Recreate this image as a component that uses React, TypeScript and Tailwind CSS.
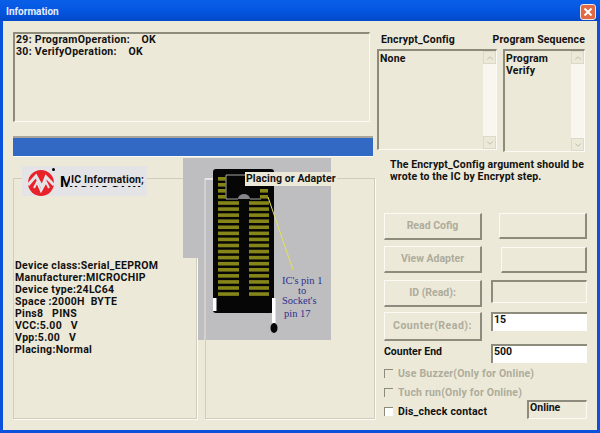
import React from 'react';
import { ChevronUp, ChevronDown } from 'lucide-react';

const FONT = "font-['Roboto','Liberation_Sans',Arial,sans-serif]";
const SUNKEN = 'border-t-2 border-l-2 border-t-[#8d8b7c] border-l-[#8d8b7c] border-b border-r border-b-[#fbfaf4] border-r-[#fbfaf4]';

const INFO_LINES = [
    'Device class:Serial_EEPROM',
    'Manufacturer:MICROCHIP',
    'Device type:24LC64',
    'Space :2000H  BYTE',
    'Pins8   PINS',
    'VCC:5.00   V',
    'Vpp:5.00   V',
    'Placing:Normal',
];

// disabled xp style scrollbar
const ScrollBar = () => (
    <div className="w-[13px] h-full bg-[#f8f6ef] flex flex-col justify-between shrink-0">
        <div className="h-[13px] bg-[#ece9d8] border border-[#dcd9c8] flex items-center justify-center">
            <ChevronUp size={10} strokeWidth={2} className="text-[#b5b3a4]" />
        </div>
        <div className="h-[13px] bg-[#ece9d8] border border-[#dcd9c8] flex items-center justify-center">
            <ChevronDown size={10} strokeWidth={2} className="text-[#b5b3a4]" />
        </div>
    </div>
);

const XpButton = ({ className, label }: { className: string; label?: string }) => (
    <div className={`flex items-center justify-center text-[#aeac9c] font-bold border-t border-l border-t-[#fbfaf4] border-l-[#fbfaf4] border-b-2 border-r-2 border-b-[#8d8b7c] border-r-[#8d8b7c] ${className}`}>
        {label}
    </div>
);

const CheckRow = ({ label, disabled }: { label: string; disabled?: boolean }) => (
    <div className={`flex items-center h-[19px] gap-[5px] font-bold tracking-[0.2px] ${disabled ? 'text-[#aeac9c]' : 'text-[#111]'}`}>
        <div className={`w-[9px] h-[9px] border-t border-l border-t-[#8d8b7c] border-l-[#8d8b7c] ${disabled ? 'bg-[#ece9d8]' : 'bg-white'}`} />
        <span>{label}</span>
    </div>
);

// socket picture that hangs over both group boxes
const SocketPicture = () => {
    const rows = Array.from({ length: 16 }, (_, i) => 45 + i * 6.07);
    return (
        <svg className="absolute left-[170px] -top-[20px]" width="150" height="184" viewBox="0 0 150 184">
            <path d="M0 0H148V182H15V100H0Z" fill="#bebec1" />
            <path d="M22 21H63" stroke="#f4f3ec" strokeWidth="1.5" />
            <path d="M22 21V182" stroke="#e6e5de" strokeWidth="1" />
            <rect x="30" y="11" width="61" height="144" rx="3" fill="#060606" />
            <path d="M43 17H62M43 17V41H55M67 41H78" fill="none" stroke="#cfcfc8" strokeWidth="0.8" />
            <path d="M55 41a6 5 0 0 1 12 0Z" fill="#85858a" />
            {[21, 27, 33, 39].map((y) => (
                <rect key={`l${y}`} x="35" y={y - 2} width="8" height="3.6" fill="#85851a" />
            ))}
            {[33, 39].map((y) => (
                <rect key={`r${y}`} x="77" y={y - 2} width="8" height="3.6" fill="#85851a" />
            ))}
            {rows.map((y) => (
                <g key={y}>
                    <rect x="35" y={y - 1.8} width="21" height="3.6" fill="#85851a" />
                    <rect x="66" y={y - 1.8} width="20" height="3.6" fill="#85851a" />
                </g>
            ))}
            <rect x="30" y="140" width="3.5" height="13" fill="#ffffff" />
            <rect x="89" y="140" width="3.5" height="26" fill="#ffffff" />
            <ellipse cx="91" cy="170" rx="3.5" ry="5" fill="#060606" />
            <path d="M85 39L110 112" stroke="#e4e05a" strokeWidth="1" />
            <g fill="#2e2e8c" fontFamily="'Liberation Serif', serif" fontSize="10.5" fontWeight="400">
                <text x="99" y="126">IC's pin 1</text>
                <text x="115" y="136">to</text>
                <text x="99" y="146">Socket's</text>
                <text x="101" y="159">pin  17</text>
            </g>
        </svg>
    );
};

const MicrochipLogo = () => (
    <div className="absolute left-[9px] -top-[12px] w-[125px] h-[30px] bg-[#e4e4e7] overflow-hidden">
        <svg className="absolute left-[6px] top-[2px]" width="26" height="28" viewBox="0 0 26 28">
            <circle cx="13" cy="15" r="13" fill="#e8222a" />
            <path d="M0 17L8 8L14 19L18 9L26 17" fill="none" stroke="#e4e4e7" strokeWidth="3" />
            <path d="M6 20L9 14L13 23L18 14L21 20" fill="none" stroke="#e4e4e7" strokeWidth="2" />
        </svg>
        <div className="absolute left-[30px] top-[2px] w-[3px] h-[3px] rounded-full bg-black" />
        <span className="absolute left-[38px] top-[8px] text-[15px] leading-[17px] font-bold text-black tracking-[0.6px] whitespace-pre">MICROCHIP</span>
        <span className="absolute left-[48px] top-[7px] h-[13px] pl-px pr-[3px] bg-[#e4e4e7] leading-[13px] font-bold text-[#111] whitespace-pre tracking-[0.15px]">IC Information;</span>
    </div>
);

export default function App() {
    return (
        <div className={`w-[600px] h-[433px] flex flex-col bg-[#0a52dc] overflow-hidden text-[10.5px] leading-[12px] ${FONT}`}>
            {/* Title bar */}
            <div className="h-[21px] flex items-center justify-between pl-[6px] pr-[4px] bg-gradient-to-b from-[#0a5fe8] via-[#0456e0] to-[#0349c8] shrink-0">
                <span className="text-[10px] mt-[3px] font-bold text-[#e6eefc]">Information</span>
                <div className="w-[16px] h-[16px] mt-[2px] rounded-[3px] border border-[#f4e6e0] bg-[#df6a43] flex items-center justify-center">
                    <svg width="10" height="10" viewBox="0 0 10 10">
                        <path d="M1.5 1.5L8.5 8.5M8.5 1.5L1.5 8.5" stroke="#ffffff" strokeWidth="2" />
                    </svg>
                </div>
            </div>

            {/* Dialog body */}
            <div className="flex-1 mx-[3px] mb-[3px] bg-[#ece9d8] flex text-[#111] font-bold">
                <div className="w-[362px] ml-[10px] pt-[11px] flex flex-col">
                    <div className={`w-[357px] h-[90px] pl-px whitespace-pre tracking-[0.3px] ${SUNKEN}`}>
                        <div>29: ProgramOperation:    OK</div>
                        <div>30: VerifyOperation:    OK</div>
                    </div>
                    <div className="w-[360px] h-[21px] mt-[14px] bg-[#3169c4] border-t-2 border-t-[#a8a698] border-b border-b-[#fbfaf4]" />

                    <div className="relative flex gap-[8px] mt-[21px]">
                        <div className="relative w-[184px] h-[241px] border border-[#cfcdbd] shadow-[1px_1px_0_#fbfaf4] pt-[81px] pl-px whitespace-pre tracking-[0.3px]">
                            {INFO_LINES.map((line) => (
                                <div key={line}>{line}</div>
                            ))}
                        </div>
                        <div className="w-[170px] h-[241px] border border-[#cfcdbd] shadow-[1px_1px_0_#fbfaf4]" />
                        <SocketPicture />
                        <div className="absolute left-[232px] -top-[6px] h-[14px] px-px bg-[#ece9d8] leading-[14px] whitespace-pre tracking-[0.1px]">Placing or Adapter</div>
                        <div className="absolute left-0 top-0 w-[184px]">
                            <MicrochipLogo />
                        </div>
                    </div>
                </div>

                {/* Right column */}
                <div className="w-[210px] ml-[2px] pt-[10px] flex flex-col">
                    <div className="flex h-[17px] items-center pr-[2px] tracking-[0.15px]">
                        <span className="ml-[4px]">Encrypt_Config</span>
                        <span className="ml-auto">Program Sequence</span>
                    </div>
                    <div className="flex items-start mt-px tracking-[0.2px]">
                        <div className={`w-[120px] h-[101px] flex ${SUNKEN}`}>
                            <div className="flex-1 pt-[2px] pl-px">None</div>
                            <ScrollBar />
                        </div>
                        <div className={`w-[82px] h-[103px] ml-[6px] flex ${SUNKEN}`}>
                            <div className="flex-1 pt-[2px] pl-px">
                                <div>Program</div>
                                <div>Verify</div>
                            </div>
                            <ScrollBar />
                        </div>
                    </div>
                    <div className="mt-[7px] ml-[13px] whitespace-pre tracking-[0.13px]">
                        <div>The Encrypt_Config argument should be</div>
                        <div>wrote to the IC by Encrypt step.</div>
                    </div>

                    <div className="mt-[30px] ml-[7px] flex flex-col w-[203px]">
                        <div className="flex justify-between h-[27px]">
                            <XpButton className="w-[98px] h-[27px]" label="Read Cofig" />
                            <XpButton className="w-[88px] h-[26px]" />
                        </div>
                        <div className="flex justify-between h-[27px] mt-[6px]">
                            <XpButton className="w-[98px] h-[27px]" label="View Adapter" />
                            <XpButton className="w-[86px] h-[26px] mt-px" />
                        </div>
                        <div className="flex justify-between h-[27px] mt-[7px]">
                            <XpButton className="w-[98px] h-[27px]" label="ID (Read):" />
                            <div className={`w-[96px] h-[23px] ${SUNKEN}`} />
                        </div>
                        <div className="flex justify-between h-[29px] mt-[5px]">
                            <XpButton className="w-[98px] h-[29px] tracking-[0.5px]" label="Counter(Read):" />
                            <div className="w-[96px] h-[19px] bg-white border-t-2 border-l-2 border-t-[#8d8b7c] border-l-[#8d8b7c] pl-px leading-[11px]">15</div>
                        </div>
                        <div className="flex justify-between h-[19px] mt-[3px]">
                            <span className="self-center pb-[3px]">Counter End</span>
                            <div className="w-[96px] h-[19px] bg-white border-t-2 border-l-2 border-t-[#8d8b7c] border-l-[#8d8b7c] pl-px leading-[11px]">500</div>
                        </div>
                        <div className="mt-px">
                            <CheckRow label="Use Buzzer(Only for Online)" disabled />
                            <CheckRow label="Tuch run(Only for Online)" disabled />
                            <div className="flex justify-between items-start h-[20px]">
                                <CheckRow label="Dis_check contact" />
                                <div className={`w-[60px] h-[19px] -mt-[2px] pl-px ${SUNKEN}`}>Online</div>
                            </div>
                        </div>
                    </div>
                </div>
            </div>
        </div>
    );
}
